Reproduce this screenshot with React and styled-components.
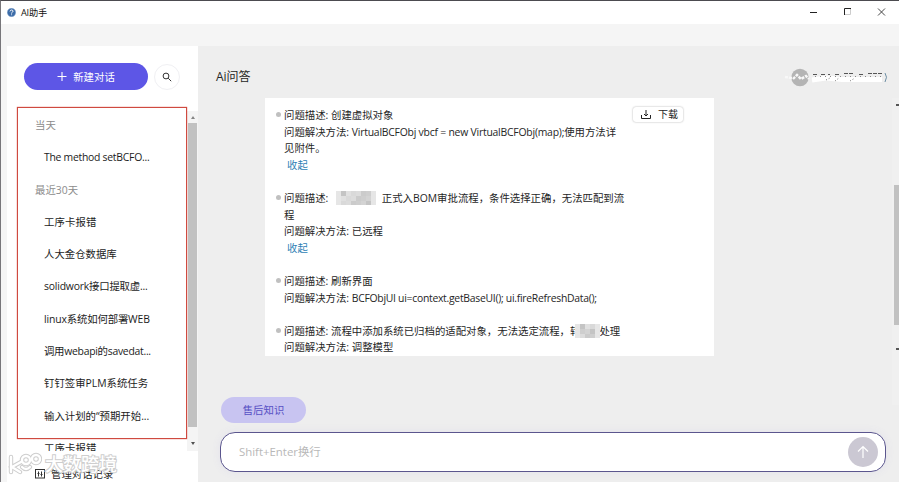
import React from 'react';
import styled, { createGlobalStyle } from 'styled-components';

const GlobalStyle = createGlobalStyle`
  * {
    box-sizing: border-box;
  }

  body {
    margin: 0;
    overflow: hidden;
    font-family: "Open Sans", "Noto Sans CJK SC", sans-serif;
    font-size: 10.4px;
    color: #262626;
  }

  button, input {
    font-family: inherit;
    font-size: inherit;
  }
`;

const Window = styled.div`
  position: relative;
  display: flex;
  flex-direction: column;
  width: 899px;
  height: 482px;
  overflow: hidden;
  background: #f5f5f5;
  border-top: 1px solid #4c4b50;
  border-left: 1px solid #77767a;
`;

const TitleBar = styled.header`
  display: flex;
  align-items: center;
  flex: none;
  height: 23px;
  padding-left: 6px;
  background: #fff;
`;

const AppName = styled.span`
  flex: 1;
  margin-left: 5px;
  font-size: 9.2px;
  line-height: 14px;
  letter-spacing: -0.2px;
  color: #111;
`;

const WindowButtons = styled.div`
  display: flex;
  align-items: center;
  gap: 25px;
  margin: 0 13px 2px 0;

  svg {
    display: block;
  }
`;

const Body = styled.div`
  display: flex;
  flex: 1;
  min-height: 0;
  margin-top: 22px;
  padding-left: 6px;
`;

const Sidebar = styled.aside`
  display: flex;
  flex-direction: column;
  flex: none;
  width: 191px;
  background: #fff;
`;

const Actions = styled.div`
  display: flex;
  align-items: center;
  flex: none;
  gap: 6px;
  height: 65px;
  padding: 0 0 4px 17px;
`;

const NewChat = styled.button`
  display: flex;
  align-items: center;
  justify-content: center;
  gap: 6px;
  width: 124px;
  height: 27px;
  padding: 0 0 1px;
  border: 0;
  border-radius: 14px;
  background: #5d56e6;
  color: #fff;
`;

const SearchButton = styled.button`
  display: flex;
  align-items: center;
  justify-content: center;
  width: 26px;
  height: 26px;
  padding: 0;
  border: 1px solid #f0f0f3;
  border-radius: 50%;
  background: #fff;
  color: #333;
`;

const History = styled.div`
  position: relative;
  display: flex;
  flex: none;
  height: 340px;
`;

const HistoryList = styled.div`
  flex: 1;
  overflow: hidden;
  padding-top: 2px;
`;

const Highlight = styled.div`
  position: absolute;
  top: -4px;
  left: 10px;
  width: 170px;
  height: 332px;
  border: 1px solid #cf4a40;
  box-shadow: 0 0 1px #d8483d;
`;

const Row = styled.div`
  height: 32.3px;
  padding-left: ${({ $group }) => ($group ? 28 : 37)}px;
  line-height: 25px;
  letter-spacing: ${({ $spacing }) => $spacing || 0}px;
  white-space: nowrap;
  color: ${({ $group }) => ($group ? '#8c8c8c' : '#1c1c1c')};
`;

const Scrollbar = styled.div`
  display: flex;
  flex-direction: column;
  align-items: center;
  flex: none;
  width: 11px;
  background: #f4f4f4;
`;

const Arrow = styled.span`
  width: 0;
  height: 0;
  margin: ${({ $down }) => ($down ? '15px 0 0' : '5px 0 4px')};
  border: 2.5px solid transparent;
  border-width: ${({ $down }) => ($down ? '3px 2.5px 0' : '0 2.5px 3px')};
  border-color: ${({ $down }) => ($down ? '#505050 transparent' : 'transparent transparent #858585')};
`;

const Thumb = styled.div`
  width: 9px;
  height: 304px;
  background: #c1c1c1;
`;

const Manage = styled.div`
  display: flex;
  align-items: center;
  gap: 5px;
  height: 31px;
  padding: 14px 0 0 28px;
  line-height: 16px;
`;

const Main = styled.main`
  display: flex;
  flex: 1;
  min-width: 0;
  background: #eee;
`;

const Content = styled.div`
  display: flex;
  flex-direction: column;
  flex: 1;
  padding-left: 22px;
`;

const Heading = styled.div`
  display: flex;
  align-items: center;
  justify-content: space-between;
  flex: none;
  height: 52px;
  padding: 10px 4px 0 0;
  margin-left: -4px;
`;

const Title = styled.h1`
  margin: 0;
  font-size: 12px;
  font-weight: 400;
  line-height: 20px;
  color: #262626;
`;

const Card = styled.section`
  position: relative;
  flex: none;
  width: 449px;
  height: 258px;
  margin-left: 45px;
  padding: 9px 0 0 11px;
  overflow: hidden;
  background: #fff;
`;

const Answer = styled.div`
  display: flex;
  margin-bottom: 16.6px;
`;

const Bullet = styled.span`
  flex: none;
  width: 5px;
  height: 5px;
  margin: 5px 3px 0 0;
  border-radius: 50%;
  background: #c0c0c0;
`;

const Line = styled.div`
  display: flex;
  align-items: center;
  height: 16.6px;
  line-height: 16.6px;
  white-space: pre;
`;

const Run = styled.span`
  letter-spacing: ${({ $spacing }) => $spacing || 0}px;
`;

const Patch = styled.svg`
  flex: none;
  margin: 0 ${({ $overlap }) => ($overlap ? -1 : 0)}px 0 ${({ $overlap }) => ($overlap ? -5 : 0)}px;
  z-index: 1;
`;

const Toggle = styled.a`
  margin-left: 3px;
  color: #2f7fb5;
`;

const Download = styled.button`
  position: absolute;
  top: 9px;
  left: 368px;
  display: flex;
  align-items: center;
  gap: 7px;
  width: 50px;
  height: 15px;
  padding: 0 0 0 8px;
  border: 0;
  border-radius: 3px;
  background: #fff;
  box-shadow: 0 0 2px rgba(0, 0, 0, 0.35);
  font-size: 10px;
  line-height: 15px;
  color: #222;
`;

const Composer = styled.div`
  display: flex;
  flex-direction: column;
  gap: 9px;
  margin-top: 41px;
`;

const Tag = styled.button`
  width: 85px;
  height: 26px;
  margin-left: 1px;
  padding: 0 0 2px;
  border: 0;
  border-radius: 13px;
  background: #c8c4f1;
  color: #5650c4;
`;

const InputBox = styled.div`
  display: flex;
  align-items: center;
  width: 666px;
  height: 40px;
  padding: 0 7px 0 18px;
  border: 1px solid #5b568e;
  border-radius: 15px;
  background: #fff;
  box-shadow: 0 0 10px rgba(110, 100, 220, 0.08);
`;

const Input = styled.input`
  flex: 1;
  padding: 0 0 2px;
  border: 0;
  outline: 0;
  background: none;
  font-size: 11.4px;

  &::placeholder {
    color: #b8b8b8;
    opacity: 1;
  }
`;

const Send = styled.button`
  display: flex;
  align-items: center;
  justify-content: center;
  width: 30px;
  height: 30px;
  padding: 0;
  border: 0;
  border-radius: 50%;
  background: #cbc8d3;
`;

const PageScrollbar = styled.div`
  display: flex;
  flex-direction: column;
  flex: none;
  width: 7px;
  height: 307px;
  margin-top: 52px;
  background: #f0f0f0;
`;

const PageThumb = styled.div`
  width: 5px;
  height: 140px;
  margin: 79px 0 0 2px;
  background: #c1c1c1;
`;

const EdgeArrow = styled.span`
  align-self: flex-end;
  width: 3px;
  height: 2px;
  margin-top: ${({ $top }) => $top}px;
  background: #555;
`;

const Watermark = styled.div`
  position: absolute;
  left: 7px;
  top: 450px;
  display: flex;
  align-items: center;
  gap: 3px;
  font-size: 18px;
  line-height: 26px;
  font-weight: 500;
  color: #fff;
  -webkit-text-stroke: 2px #cecece;
  paint-order: stroke fill;
`;

const HelpIcon = () => (
  <svg width="9" height="9" viewBox="0 0 9 9">
    <circle cx="4.5" cy="4.5" r="4.2" fill="#3c6ca8" stroke="#86a9d0" strokeWidth=".5" />
    <path d="M3 3.4Q3.2 2 4.6 2T6 3.3Q6 4 4.6 4.8V5.5M4.6 6.4V7.2" fill="none" stroke="#fff" strokeWidth="1" />
  </svg>
);

const tones = ['#e0e0e0', '#d3d3d3', '#cbcbcb', '#d9d9d9', '#c4c4c4', '#cecece', '#dcdcdc'];

// pixelated patch over private names
const Mosaic = ({ cols, overlap }) => (
  <Patch
    $overlap={overlap}
    width={cols * 5}
    height="14"
    viewBox={`0 0 ${cols * 5} 14`}
    shapeRendering="crispEdges"
  >
    {Array.from({ length: cols * 3 }, (_, i) => (
      <rect
        key={i}
        x={(i % cols) * 5}
        y={Math.floor(i / cols) * 5}
        width="5"
        height="5"
        fill={i % cols === 0 || i % cols === cols - 1 ? '#e6e6e6' : tones[(i * 3 + 1) % tones.length]}
      />
    ))}
  </Patch>
);

const UserBadge = () => (
  <svg width="104" height="20" viewBox="0 0 104 20">
    <circle cx="16" cy="10.5" r="8.7" fill="#b4b4b4" />
    <path d="M1 10L8 11M9 12L13 8L17 12L22 9L25 12" fill="none" stroke="#f8f8f8" strokeWidth="2.4" strokeDasharray="3 1" />
    <path d="M28 13L42 11L58 12.5L98 12.5" fill="none" stroke="#fff" strokeWidth="5" />
    <path d="M29 7.5H34M37 7.5H41M44 7.5H46M51 7.5H55M60 6.5H69M75 7.5H79M84 6.5H98" stroke="#555" strokeWidth="1" strokeDasharray="4 1" />
    <path d="M31 9.5H99" stroke="#888" strokeWidth="1" strokeDasharray="1 4" />
    <path d="M42 13L46 11M51 14L55 11M66 14L71 11" stroke="#777" strokeWidth="1" strokeDasharray="1 2" />
    <path d="M101 6Q104 10 101 15" fill="none" stroke="#6e8fa4" strokeWidth="1" />
  </svg>
);

const history = [
  { text: '当天', group: true },
  { text: 'The method setBCFO...', spacing: -0.26 },
  { text: '最近30天', group: true },
  { text: '工序卡报错', spacing: 0.1 },
  { text: '人大金仓数据库' },
  { text: 'solidwork接口提取虚...', spacing: -0.2 },
  { text: 'linux系统如何部署WEB', spacing: -0.15 },
  { text: '调用webapi的savedat...', spacing: -0.27 },
  { text: '钉钉签审PLM系统任务' },
  { text: '输入计划的“预期开始...' },
  { text: '工序卡报错', spacing: 0.1 },
];

export default function App() {
  return (
    <>
      <GlobalStyle />
      <Window>
        <TitleBar>
          <HelpIcon />
          <AppName>AI助手</AppName>
          <WindowButtons>
            <svg width="9" height="9"><path d="M1 5.5H8" stroke="#222" /></svg>
            <svg width="9" height="9"><path d="M1.5 8V1.5H8" fill="none" stroke="#222" /><path d="M7.5 2V7.5H2" fill="none" stroke="#ccc" /></svg>
            <svg width="9" height="9"><path d="M1 1.5L8 8.5M8 1.5L1 8.5" stroke="#333" strokeWidth=".9" /></svg>
          </WindowButtons>
        </TitleBar>

        <Body>
          <Sidebar>
            <Actions>
              <NewChat>
                <svg width="10" height="10"><path d="M0.5 5.5H9.5M5 1V10" stroke="#fff" strokeWidth="1.1" /></svg>
                新建对话
              </NewChat>
              <SearchButton>
                <svg width="10" height="10" fill="none" stroke="currentColor" strokeWidth="1">
                  <circle cx="4" cy="4" r="2.9" />
                  <path d="M6.2 6.2L9.2 9.2" />
                </svg>
              </SearchButton>
            </Actions>
            <History>
              <HistoryList>
                {history.map(({ text, group, spacing }, i) => (
                  <Row key={i} $group={group} $spacing={spacing}>{text}</Row>
                ))}
              </HistoryList>
              <Scrollbar>
                <Arrow />
                <Thumb />
                <Arrow $down />
              </Scrollbar>
              <Highlight />
            </History>
            <Manage>
              <svg width="11" height="10" fill="none" stroke="#333">
                <rect x=".5" y=".5" width="9" height="8.5" />
                <path d="M3.5 2.5V4M3.5 5V7.5M6.5 2.5V5M6.5 6V7.5M2.5 4.5H4.5M5.5 5.5H7.5" />
              </svg>
              管理对话记录
            </Manage>
          </Sidebar>

          <Main>
            <Content>
              <Heading>
                <Title>Ai问答</Title>
                <UserBadge />
              </Heading>
              <Card>
                <Answer>
                  <Bullet />
                  <div>
                    <Line>问题描述: 创建虚拟对象</Line>
                    <Line>问题解决方法: <Run $spacing={-0.22}>VirtualBCFObj vbcf = new VirtualBCFObj(map);</Run>使用方法详</Line>
                    <Line>见附件。</Line>
                    <Line><Toggle>收起</Toggle></Line>
                  </div>
                </Answer>
                <Answer>
                  <Bullet />
                  <div>
                    <Line>问题描述:   <Mosaic cols={8} />  正式入BOM审批流程，条件选择正确，无法匹配到流</Line>
                    <Line>程</Line>
                    <Line>问题解决方法: 已远程</Line>
                    <Line><Toggle>收起</Toggle></Line>
                  </div>
                </Answer>
                <Answer>
                  <Bullet />
                  <div>
                    <Line>问题描述: 刷新界面</Line>
                    <Line>问题解决方法: <Run $spacing={-0.28}>BCFObjUI ui=context.getBaseUI(); ui.fireRefreshData();</Run></Line>
                  </div>
                </Answer>
                <Answer>
                  <Bullet />
                  <div>
                    <Line>问题描述: 流程中添加系统已归档的适配对象，无法选定流程，转<Mosaic cols={5} overlap />处理</Line>
                    <Line>问题解决方法: 调整模型</Line>
                  </div>
                </Answer>
                <Download>
                  <svg width="10" height="9" fill="none" stroke="#222">
                    <path d="M.5 5V8.5H9.5V5M5 0V6M3 4L5 6L7 4" />
                  </svg>
                  下载
                </Download>
              </Card>
              <Composer>
                <Tag>售后知识</Tag>
                <InputBox>
                  <Input placeholder="Shift+Enter换行" />
                  <Send>
                    <svg width="14" height="14" fill="none" stroke="#fff" strokeWidth="1.2">
                      <path d="M7 13V1.5M2 6.5L7 1.5L12 6.5" />
                    </svg>
                  </Send>
                </InputBox>
              </Composer>
            </Content>
            <PageScrollbar>
              <EdgeArrow $top={6} />
              <PageThumb />
              <EdgeArrow $top={23} />
            </PageScrollbar>
          </Main>
        </Body>

        <Watermark>
          <svg width="34" height="24" fill="none" strokeLinecap="round">
            {['#cecece', '#fff'].map((color, i) => (
              <g key={color} stroke={color} strokeWidth={i ? 2.4 : 4.4}>
                <path d="M3 5V20M13 10L4 15L12 20" />
                <circle cx="18" cy="8" r="4" />
                <circle cx="28" cy="7" r="4" />
                <path d="M14 15Q18 19 22 15" />
              </g>
            ))}
          </svg>
          大数跨境
        </Watermark>
      </Window>
    </>
  );
}
